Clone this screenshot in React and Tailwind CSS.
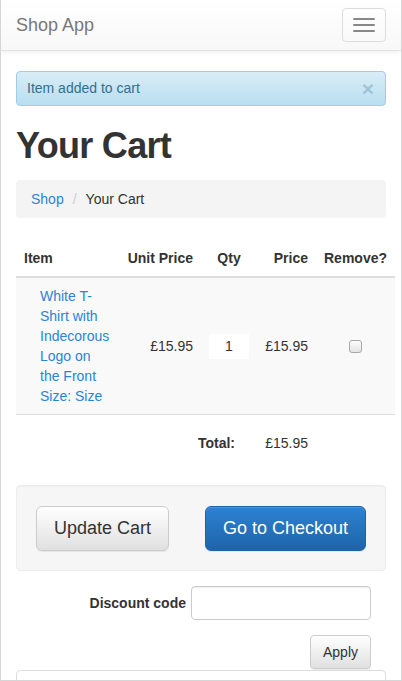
const font = { fontFamily: '"Liberation Sans", Arial, sans-serif' };

function Navbar() {
  return (
    <div className="h-[51px] flex items-center justify-between pl-[15px] pr-4 border-b border-[#e2e2e2] bg-gradient-to-b from-white to-[#f8f8f8] shadow-[0_1px_5px_rgba(0,0,0,0.075)]">
      <span className="text-[18px] leading-5 text-[#777]">Shop App</span>
      <button className="w-[44px] h-[34px] mr-[-1px] border border-[#ddd] rounded flex flex-col items-center justify-center gap-[4px]">
        <span className="block w-[22px] h-[2px] bg-[#888] rounded-[1px]" />
        <span className="block w-[22px] h-[2px] bg-[#888] rounded-[1px]" />
        <span className="block w-[22px] h-[2px] bg-[#888] rounded-[1px]" />
      </button>
    </div>
  );
}

function CartTable() {
  return (
    <table className="table-fixed border-collapse w-[379px] text-[14px] leading-5 text-[#333] mt-5">
      <colgroup>
        <col className="w-[104px]" />
        <col className="w-[81px]" />
        <col className="w-[56px]" />
        <col className="w-[59px]" />
        <col className="w-[79px]" />
      </colgroup>
      <thead>
        <tr className="border-b-2 border-[#ddd]">
          <th className="pt-[10px] pb-2 px-2 text-left font-bold whitespace-nowrap">Item</th>
          <th className="pt-[10px] pb-2 pl-0 pr-2 text-right font-bold whitespace-nowrap">Unit Price</th>
          <th className="pt-[10px] pb-2 px-2 text-center font-bold whitespace-nowrap">Qty</th>
          <th className="pt-[10px] pb-2 px-2 text-right font-bold whitespace-nowrap">Price</th>
          <th className="pt-[10px] pb-2 px-0 text-center font-bold whitespace-nowrap">Remove?</th>
        </tr>
      </thead>
      <tbody>
        <tr className="bg-[#f9f9f9] border-b border-[#ddd]">
          <td className="p-2 align-middle">
            <div className="pl-4 text-[#2a84d6]">
              <a>White T-Shirt with Indecorous Logo on the Front</a>
              <div>Size: Size</div>
            </div>
          </td>
          <td className="p-2 text-right align-middle">£15.95</td>
          <td className="py-2 px-0 align-middle">
            <div className="mx-auto w-[40px] h-[25px] bg-white flex items-center justify-center">1</div>
          </td>
          <td className="p-2 text-right align-middle">£15.95</td>
          <td className="p-2 align-middle">
            <span className="block mx-auto w-[13px] h-[13px] rounded-[3px] border border-[#a8a8a8] bg-gradient-to-b from-[#fdfdfd] to-[#e4e4e4]" />
          </td>
        </tr>
        <tr>
          <td colSpan={3} className="pt-[18px] pb-[12px] pr-[22px] text-right font-bold">Total:</td>
          <td className="pt-[18px] pb-[12px] px-2 text-right">£15.95</td>
          <td />
        </tr>
      </tbody>
    </table>
  );
}

export default function App() {
  return (
    <div style={font} className="w-[402px] h-[681px] overflow-hidden border-x border-b border-[#d6d6d6] bg-white text-[#333] text-[14px]">
      <Navbar />
      <div className="px-[15px]">
        <div className="mt-5 h-[35px] px-[10px] flex items-center justify-between rounded border border-[#9acfea] bg-gradient-to-b from-[#d9edf7] to-[#b9def0] text-[#31708f] text-[14px]">
          <span>Item added to cart</span>
          <span className="text-[21px] font-bold leading-none text-[#31708f]/30 mr-[1px]">×</span>
        </div>

        <h1 className="mt-5 mb-[14px] text-[36px] leading-[40px] font-bold text-[#333] tracking-[-0.7px]">Your Cart</h1>

        <div className="h-[38px] px-[15px] flex items-center rounded bg-[#f4f4f4] text-[14px]">
          <a className="text-[#2a84d6]">Shop</a>
          <span className="px-[9px] text-[#ccc]">/</span>
          <span className="text-[#333]">Your Cart</span>
        </div>

        <CartTable />

        <div className="mt-5 h-[86px] px-[19px] flex items-center justify-between rounded border border-[#ececec] bg-[#f6f6f6] shadow-[inset_0_1px_1px_rgba(0,0,0,0.03)]">
          <button className="h-[45px] px-[17px] rounded-md border border-[#ccc] bg-gradient-to-b from-white to-[#e0e0e0] text-[18px] text-[#333] shadow-[inset_0_1px_0_rgba(255,255,255,0.15),0_1px_1px_rgba(0,0,0,0.075)]">
            Update Cart
          </button>
          <button className="h-[45px] px-[17px] rounded-md border border-[#2263a5] bg-gradient-to-b from-[#2d82d2] to-[#1e64aa] text-[18px] text-white shadow-[inset_0_1px_0_rgba(255,255,255,0.15),0_1px_1px_rgba(0,0,0,0.075)]">
            Go to Checkout
          </button>
        </div>

        <div className="mt-[15px] pr-[15px] flex items-center justify-end gap-[5px]">
          <label className="font-bold text-[14px] text-[#333]">Discount code</label>
          <input className="w-[180px] h-[34px] rounded border border-[#ccc] bg-white shadow-[inset_0_1px_1px_rgba(0,0,0,0.075)]" />
        </div>

        <div className="mt-[15px] pr-[15px] flex justify-end">
          <button className="h-[34px] px-3 rounded border border-[#ccc] bg-gradient-to-b from-white to-[#e0e0e0] text-[14px] text-[#333] shadow-[0_1px_1px_rgba(0,0,0,0.075)]">
            Apply
          </button>
        </div>

        <div className="mt-[1px] h-[40px] rounded-t border border-[#ddd]" />
      </div>
    </div>
  );
}
